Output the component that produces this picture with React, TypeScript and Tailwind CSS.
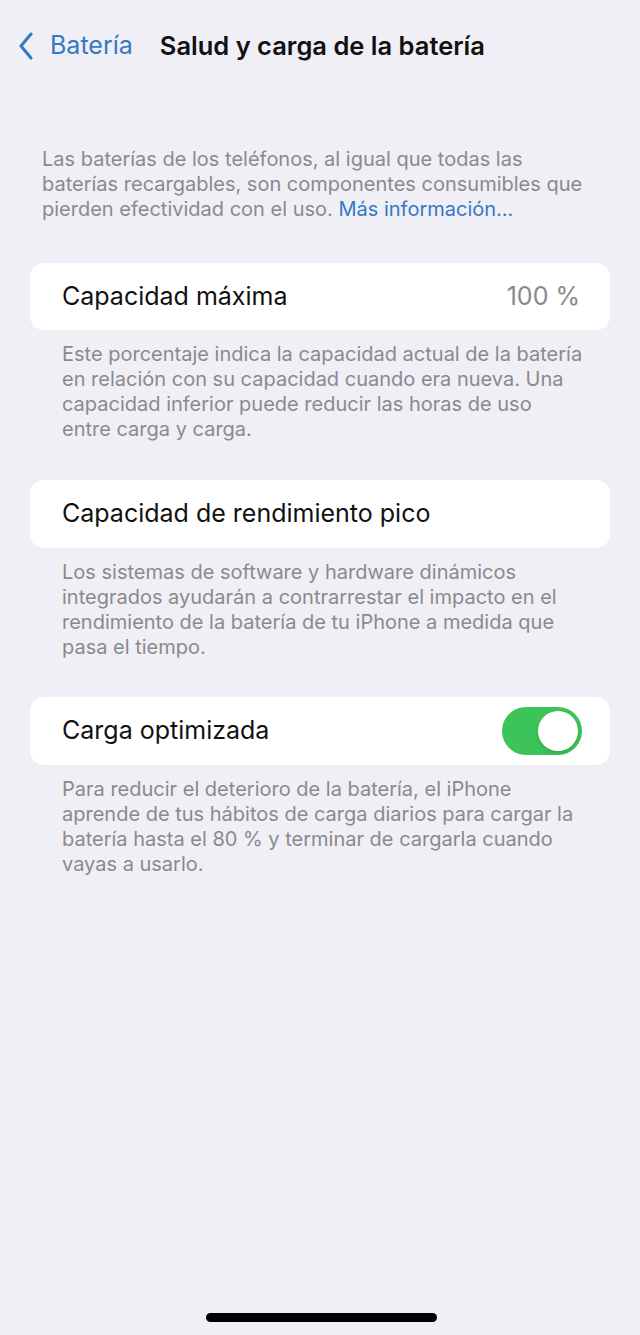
import React from "react";

const font = { fontFamily: "Inter, 'Liberation Sans', sans-serif" };

function Chevron() {
  return (
    <svg width="16" height="28" viewBox="0 0 16 28" fill="none">
      <path d="M13 2 L3 14 L13 26" stroke="#3478c6" strokeWidth="3" strokeLinecap="round" strokeLinejoin="round" />
    </svg>
  );
}

function Toggle() {
  return (
    <div className="w-[80px] h-[48px] rounded-full bg-[#3cc45a] p-[4px] flex justify-end">
      <div className="w-[40px] h-[40px] rounded-full bg-white shadow-[0_2px_4px_rgba(0,0,0,0.15)]" />
    </div>
  );
}

function Lines({ lines, className }: { lines: React.ReactNode[]; className: string }) {
  return (
    <div className={className}>
      {lines.map((l, i) => (
        <div key={i} className="whitespace-nowrap">
          {l}
        </div>
      ))}
    </div>
  );
}

const footerCls = "pl-[62px] pt-[12px] text-[20px] leading-[25px] text-[#8a8a8e]";

export default function App() {
  return (
    <div className="w-[640px] h-[1335px] bg-[#f0eff5] flex flex-col relative" style={font}>
      <header className="flex items-center h-[56px] mt-[18px] pl-[18px]">
        <Chevron />
        <span className="ml-[16px] text-[25px] text-[#3478c6]">Batería</span>
        <span className="ml-[27px] text-[25.5px] font-semibold text-[#111]">
          Salud y carga de la batería
        </span>
      </header>

      <Lines
        className="mt-[73px] pl-[42px] text-[20px] leading-[25px] text-[#8a8a8e]"
        lines={[
          "Las baterías de los teléfonos, al igual que todas las",
          "baterías recargables, son componentes consumibles que",
          <>
            pierden efectividad con el uso. <span className="text-[#3478c6]">Más información...</span>
          </>,
        ]}
      />

      <div className="mt-[41px] mx-[30px] h-[67px] rounded-[14px] bg-white flex items-center justify-between pl-[32px] pr-[30px]">
        <span className="text-[25px] text-[#111]">Capacidad máxima</span>
        <span className="text-[25px] text-[#8a8a8e]">100 %</span>
      </div>
      <Lines
        className={footerCls}
        lines={[
          "Este porcentaje indica la capacidad actual de la batería",
          "en relación con su capacidad cuando era nueva. Una",
          "capacidad inferior puede reducir las horas de uso",
          "entre carga y carga.",
        ]}
      />

      <div className="mt-[38px] mx-[30px] h-[68px] rounded-[14px] bg-white flex items-center pl-[32px]">
        <span className="text-[25px] text-[#111]">Capacidad de rendimiento pico</span>
      </div>
      <Lines
        className={footerCls}
        lines={[
          "Los sistemas de software y hardware dinámicos",
          "integrados ayudarán a contrarrestar el impacto en el",
          "rendimiento de la batería de tu iPhone a medida que",
          "pasa el tiempo.",
        ]}
      />

      <div className="mt-[37px] mx-[30px] h-[68px] rounded-[14px] bg-white flex items-center justify-between pl-[32px] pr-[28px]">
        <span className="text-[25px] text-[#111]">Carga optimizada</span>
        <Toggle />
      </div>
      <Lines
        className={footerCls}
        lines={[
          "Para reducir el deterioro de la batería, el iPhone",
          "aprende de tus hábitos de carga diarios para cargar la",
          "batería hasta el 80 % y terminar de cargarla cuando",
          "vayas a usarlo.",
        ]}
      />

      <div className="absolute left-[206px] top-[1313px] w-[231px] h-[9px] rounded-full bg-black" />
    </div>
  );
}
